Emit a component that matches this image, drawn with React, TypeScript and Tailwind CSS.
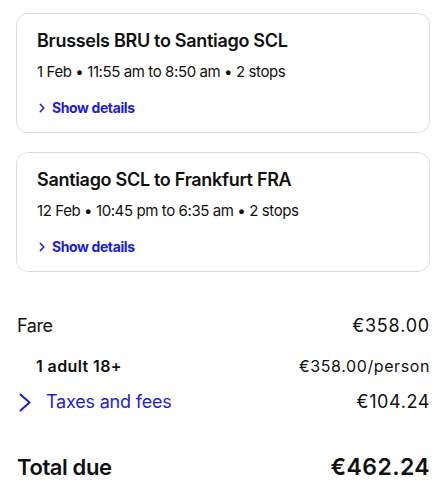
const legs = [
  {
    title: "Brussels BRU to Santiago SCL",
    info: "1 Feb • 11:55 am to 8:50 am • 2 stops",
  },
  {
    title: "Santiago SCL to Frankfurt FRA",
    info: "12 Feb • 10:45 pm to 6:35 am • 2 stops",
  },
];

function Chevron({ w, h, stroke }: { w: number; h: number; stroke: number }) {
  return (
    <svg
      width={w}
      height={h}
      viewBox={`0 0 ${w} ${h}`}
      fill="none"
      stroke="currentColor"
      strokeWidth={stroke}
      strokeLinecap="round"
      strokeLinejoin="round"
    >
      <path d={`M${stroke / 2 + 0.5} ${stroke / 2 + 0.5} L${w - stroke / 2 - 0.5} ${h / 2} L${stroke / 2 + 0.5} ${h - stroke / 2 - 0.5}`} />
    </svg>
  );
}

function LegCard({ title, info }: { title: string; info: string }) {
  return (
    <div className="rounded-xl border border-[#dcdcdc] bg-white px-5 pt-[15px] pb-[14px]">
      <h3 className="text-[18px] font-semibold leading-6 tracking-[-0.3px] text-[#111]">
        {title}
      </h3>
      <p className="mt-[9px] text-[15px] leading-5 tracking-[-0.4px] text-[#111]">
        {info}
      </p>
      <button className="mt-[16px] flex items-center gap-[7px] text-[14px] font-bold leading-5 tracking-[-0.4px] text-[#1d1dd9]">
        <span className="ml-[2px] flex">
          <Chevron w={6} h={10} stroke={1.5} />
        </span>
        Show details
      </button>
    </div>
  );
}

export default function App() {
  return (
    <div className="min-h-[490px] w-[448px] bg-white pl-4 pr-[18px] pt-[13px] font-['Inter',sans-serif] text-[#111]">
      <div className="flex flex-col gap-[19px]">
        {legs.map((leg) => (
          <LegCard key={leg.title} title={leg.title} info={leg.info} />
        ))}
      </div>

      <div className="mt-[42px] flex flex-col">
        <div className="flex items-center justify-between leading-6">
          <span className="pl-[1px] text-[18px] tracking-[-0.4px]">Fare</span>
          <span className="text-[18px] tracking-[0.8px]">€358.00</span>
        </div>
        <div className="mt-[16px] flex items-center justify-between pl-5 leading-6">
          <span className="text-[16px] font-semibold tracking-[0.4px]">
            1 adult 18+
          </span>
          <span className="text-[16px] tracking-[0.6px]">€358.00/person</span>
        </div>
        <div className="mt-[12px] flex items-center justify-between leading-6">
          <button className="flex items-center gap-[15px] text-[18px] tracking-[-0.2px] text-[#1d1dd9]">
            <span className="ml-[3px] flex">
              <Chevron w={12} h={19} stroke={2} />
            </span>
            Taxes and fees
          </button>
          <span className="text-[18px] tracking-[0.6px]">€104.24</span>
        </div>
        <div className="mt-[37px] flex items-center justify-between leading-8">
          <span className="pl-[1px] text-[22px] font-semibold tracking-[-0.4px]">
            Total due
          </span>
          <span className="text-[23px] font-semibold tracking-[0.4px]">
            €462.24
          </span>
        </div>
      </div>
    </div>
  );
}
